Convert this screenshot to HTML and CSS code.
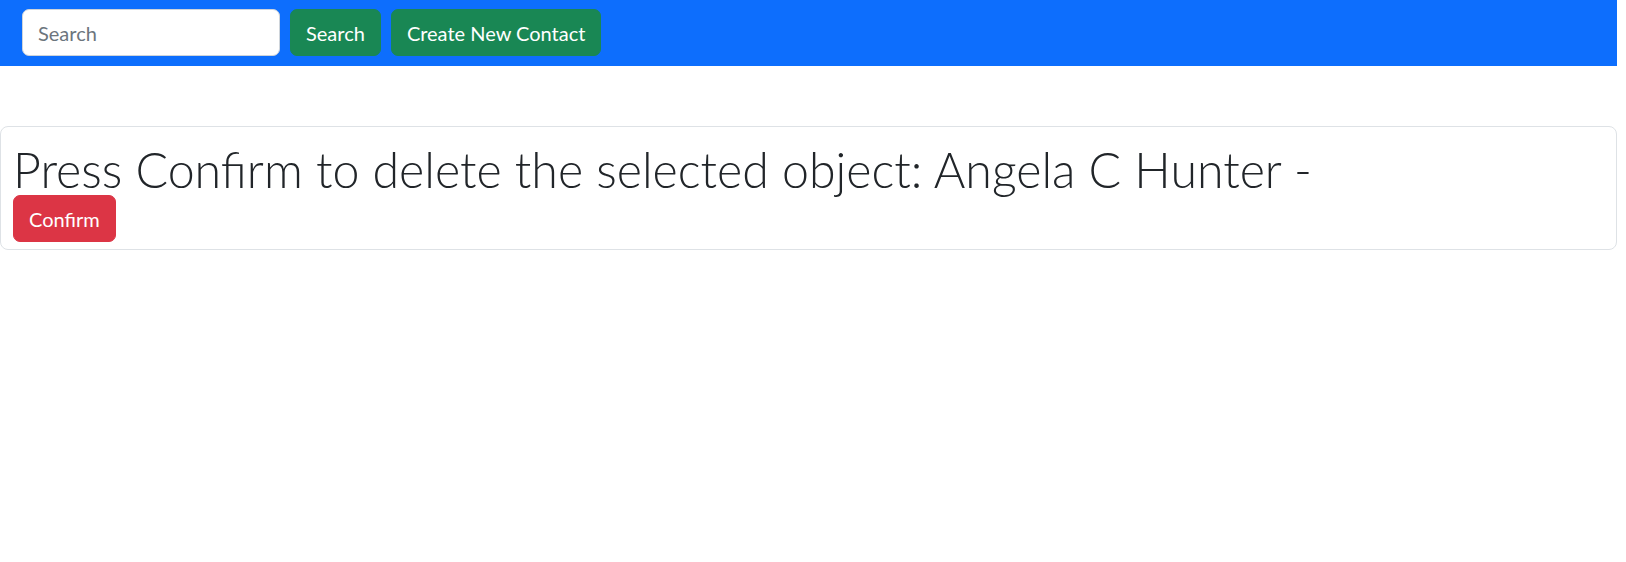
FILE: index.html
```html
<!DOCTYPE html>
<html lang="en">
<head>
<meta charset="utf-8">
<title>Delete Contact</title>
<link rel="stylesheet" href="styles.css">
</head>
<body>
<div class="page">
  <nav class="navbar">
    <input class="search-input" type="text" placeholder="Search">
    <button class="btn btn-success">Search</button>
    <button class="btn btn-success">Create New Contact</button>
  </nav>
  <main class="content">
    <div class="card">
      <h1 class="display">Press Confirm to delete the selected object: Angela C Hunter -</h1>
      <div class="actions">
        <button class="btn btn-danger">Confirm</button>
      </div>
    </div>
  </main>
</div>
</body>
</html>
```

FILE: styles.css
```css
html, body {
  margin: 0;
  padding: 0;
  background: #ffffff;
}
body {
  font-family: "Lato", "Noto Sans", sans-serif;
  color: #212529;
}
.page {
  width: 1617px;
}
.navbar {
  background: #0d6efd;
  height: 66px;
  display: flex;
  align-items: flex-start;
  gap: 10px;
  padding: 9px 0 0 22px;
  box-sizing: border-box;
}
.search-input {
  width: 258px;
  height: 47px;
  box-sizing: border-box;
  border: 1px solid #ced4da;
  border-radius: 7px;
  padding: 0 15px;
  font-family: inherit;
  font-size: 20px;
  color: #212529;
  background: #fff;
  outline: none;
}
.search-input::placeholder {
  color: #6c757d;
}
.btn {
  height: 47px;
  box-sizing: border-box;
  border: 1px solid transparent;
  border-radius: 7px;
  padding: 0 15px;
  font-family: inherit;
  font-size: 20px;
  color: #fff;
  cursor: pointer;
}
.btn-success {
  background: #198754;
  border-color: #198754;
}
.btn-wide {
  padding: 0 14px;
}
.btn-danger {
  background: #dc3545;
  border-color: #dc3545;
}
.content {
  padding-top: 60px;
}
.card {
  border: 1px solid #dee2e6;
  border-radius: 8px;
  padding: 16px 12px 7px 12px;
  display: flex;
  flex-direction: column;
}
.display {
  margin: 0;
  font-size: 48.3px;
  font-weight: 300;
  line-height: 52px;
}
.actions {
  display: flex;
}
```
